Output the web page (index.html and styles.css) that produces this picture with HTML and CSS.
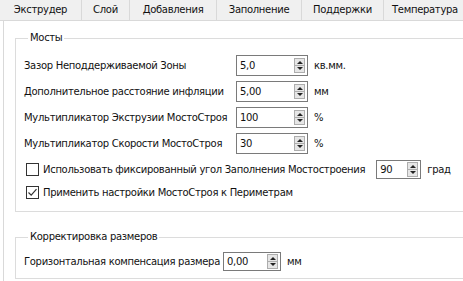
FILE: index.html
```html
<!DOCTYPE html>
<html lang="ru">
<head>
  <meta charset="UTF-8" />
  <title>Настройки печати</title>
  <link rel="stylesheet" href="styles.css">
</head>
<body>
  <div class="tabs">
    <div class="tab t1">Экструдер</div>
    <div class="tab t2">Слой</div>
    <div class="tab t3">Добавления</div>
    <div class="tab t4">Заполнение</div>
    <div class="tab t5">Поддержки</div>
    <div class="tab t6">Температура</div>
  </div>

  <div class="panel">
    <fieldset class="group bridges">
      <legend>Мосты</legend>

      <div class="row">
        <span class="label">Зазор Неподдерживаемой Зоны</span>
        <div class="spin"><span>5,0</span><i class="arrows"></i></div>
        <span class="unit">кв.мм.</span>
      </div>
      <div class="row">
        <span class="label">Дополнительное расстояние инфляции</span>
        <div class="spin"><span>5,00</span><i class="arrows"></i></div>
        <span class="unit">мм</span>
      </div>
      <div class="row">
        <span class="label">Мультипликатор Экструзии МостоСтроя</span>
        <div class="spin"><span>100</span><i class="arrows"></i></div>
        <span class="unit">%</span>
      </div>
      <div class="row">
        <span class="label">Мультипликатор Скорости МостоСтроя</span>
        <div class="spin"><span>30</span><i class="arrows"></i></div>
        <span class="unit">%</span>
      </div>
      <div class="row check-row">
        <span class="box"></span>
        <span class="check-text">Использовать фиксированный угол Заполнения Мостостроения</span>
        <div class="spin small"><span>90</span><i class="arrows"></i></div>
        <span class="unit">град</span>
      </div>
      <div class="row check-row last">
        <span class="box checked">
          <svg width="11" height="11" viewBox="0 0 11 11"><path d="M1.5 5.5 L4.2 8.2 L9.5 2.2" fill="none" stroke="#333" stroke-width="1.2"/></svg>
        </span>
        <span class="check-text">Применить настройки МостоСтроя к Периметрам</span>
      </div>
    </fieldset>

    <fieldset class="group sizes">
      <legend>Корректировка размеров</legend>
      <div class="row">
        <span class="comp-label">Горизонтальная компенсация размера</span>
        <div class="spin tiny"><span>0,00</span><i class="arrows"></i></div>
        <span class="unit">мм</span>
      </div>
    </fieldset>
  </div>
</body>
</html>
```

FILE: styles.css
```css
html, body {
  margin: 0;
  padding: 0;
  overflow: hidden;
}

body {
  width: 463px;
  height: 281px;
  background: #fff;
  font-family: "DejaVu Sans", Verdana, sans-serif;
  font-size: 10px;
  letter-spacing: -0.3px;
  color: #111;
  white-space: nowrap;
}

/* tab strip */
.tabs {
  display: flex;
  height: 20px;
  background: #f0f0f0;
  border-bottom: 1px solid #d9d9d9;
}

.tab {
  box-sizing: border-box;
  border-right: 1px solid #d9d9d9;
  text-align: center;
  line-height: 20px;
  flex: none;
}

.t1 { width: 82px; }
.t2 { width: 48px; }
.t3 { width: 87px; }
.t4 { width: 85px; }
.t5 { width: 82px; }
.t6 { width: 90px; border-right: none; padding-left: 8px; text-align: left; }

/* page body */
.panel {
  margin-left: 3px;
  width: 540px;
  height: 270px;
  border-left: 1px solid #d9d9d9;
  padding-top: 10px;
}

.group {
  margin: 0 0 0 11px;
  padding: 9px 0 8px 8px;
  border: 1px solid #dcdcdc;
  min-width: 0;
}

.group legend {
  padding: 0 2px;
  margin-left: 4px;
  line-height: 14px;
}

.sizes {
  margin-top: 18px;
  padding-top: 6px;
  padding-bottom: 6px;
}

.row {
  display: flex;
  align-items: center;
  height: 22px;
  margin-bottom: 4px;
}

.row:last-child {
  margin-bottom: 0;
}

.row.last {
  margin-top: -3px;
}

.label {
  width: 212px;
  flex: none;
}

.comp-label {
  width: 199px;
  flex: none;
}

/* spin box */
.spin {
  box-sizing: border-box;
  display: flex;
  align-items: center;
  justify-content: space-between;
  width: 72px;
  height: 21px;
  border: 1px solid #7a7a7a;
  padding: 0 2px 0 3px;
  background: #fff;
}

.spin.small {
  width: 45px;
  height: 19px;
}

.spin.tiny {
  width: 58px;
  height: 19px;
}

.arrows {
  box-sizing: border-box;
  width: 11px;
  height: 15px;
  border: 1px solid #adadad;
  background:
    linear-gradient(#adadad, #adadad) center / 100% 1px no-repeat,
    #e6e6e6;
  position: relative;
}

.arrows::before,
.arrows::after {
  content: "";
  position: absolute;
  left: 2px;
  border-left: 3px solid transparent;
  border-right: 3px solid transparent;
}

.arrows::before {
  top: 2px;
  border-bottom: 3px solid #222;
}

.arrows::after {
  bottom: 2px;
  border-top: 3px solid #222;
}

.unit {
  margin-left: 6px;
}

/* check boxes */
.check-row {
  padding-left: 2px;
}

.box {
  box-sizing: border-box;
  width: 13px;
  height: 13px;
  border: 1px solid #333;
  background: #fff;
  flex: none;
  display: flex;
  align-items: center;
  justify-content: center;
}

.check-text {
  margin-left: 4px;
  margin-right: 11px;
}
```
